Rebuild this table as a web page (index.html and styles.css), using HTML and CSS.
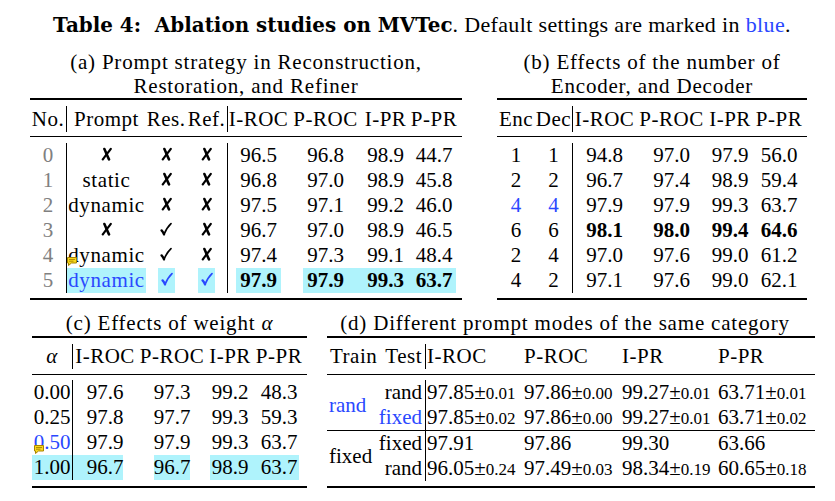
FILE: index.html
```html
<!DOCTYPE html>
<html lang="en">
<head>
<meta charset="utf-8">
<title>Table 4: Ablation studies on MVTec</title>
<link rel="stylesheet" href="styles.css">
</head>
<body>
<div class="page">
  <p class="title"><b class="title-b">Table 4:&nbsp; Ablation studies on MVTec</b><span class="title-r">. Default settings are marked in <span class="blue">blue</span>.</span></p>

  <div class="row row-top">
    <section class="sub sub-a">
      <div class="cap">(a) Prompt strategy in Reconstruction,<br>Restoration, and Refiner</div>
      <div class="rule thick"></div>
      <div class="sec sec-h">
        <div class="grid ga gh">
          <div>No.</div><div class="vl">Prompt</div><div>Res.</div><div>Ref.</div>
          <div class="vl">I-ROC</div><div>P-ROC</div><div>I-PR</div><div>P-PR</div>
        </div>
      </div>
      <div class="rule thin"></div>
      <div class="sec sec-b">
        <div class="grid ga">
          <div class="gray">0</div>
          <div class="vl"><svg class="mk" viewBox="0 0 11 14"><use href="#x"/></svg></div>
          <div><svg class="mk" viewBox="0 0 11 14"><use href="#x"/></svg></div>
          <div><svg class="mk" viewBox="0 0 11 14"><use href="#x"/></svg></div>
          <div class="vl">96.5</div><div>96.8</div><div>98.9</div><div>44.7</div>

          <div class="gray">1</div>
          <div class="vl txt">static</div>
          <div><svg class="mk" viewBox="0 0 11 14"><use href="#x"/></svg></div>
          <div><svg class="mk" viewBox="0 0 11 14"><use href="#x"/></svg></div>
          <div class="vl">96.8</div><div>97.0</div><div>98.9</div><div>45.8</div>

          <div class="gray">2</div>
          <div class="vl txt">dynamic</div>
          <div><svg class="mk" viewBox="0 0 11 14"><use href="#x"/></svg></div>
          <div><svg class="mk" viewBox="0 0 11 14"><use href="#x"/></svg></div>
          <div class="vl">97.5</div><div>97.1</div><div>99.2</div><div>46.0</div>

          <div class="gray">3</div>
          <div class="vl"><svg class="mk" viewBox="0 0 11 14"><use href="#x"/></svg></div>
          <div><svg class="mk mk-v" viewBox="0 0 12 14"><use href="#v"/></svg></div>
          <div><svg class="mk" viewBox="0 0 11 14"><use href="#x"/></svg></div>
          <div class="vl">96.7</div><div>97.0</div><div>98.9</div><div>46.5</div>

          <div class="gray">4</div>
          <div class="vl txt">dynamic</div>
          <div><svg class="mk mk-v" viewBox="0 0 12 14"><use href="#v"/></svg></div>
          <div><svg class="mk" viewBox="0 0 11 14"><use href="#x"/></svg></div>
          <div class="vl">97.4</div><div>97.3</div><div>99.1</div><div>48.4</div>

          <div class="gray">5</div>
          <div class="vl txt hl blue">dynamic</div>
          <div><span class="hlbox-s blue"><svg class="mk mk-v" viewBox="0 0 12 14"><use href="#v"/></svg></span></div>
          <div><span class="hlbox-s blue"><svg class="mk mk-v" viewBox="0 0 12 14"><use href="#v"/></svg></span></div>
          <div class="vl bold"><span class="hlbox">97.9</span></div><div class="bold hl-from14">97.9</div><div class="bold hl">99.3</div><div class="bold hl-to47">63.7</div>
        </div>
      </div>
      <div class="rule thick"></div>
    </section>

    <section class="sub sub-b">
      <div class="cap">(b) Effects of the number of<br>Encoder, and Decoder</div>
      <div class="rule thick"></div>
      <div class="sec sec-h">
        <div class="grid gb gh">
          <div>Enc</div><div>Dec</div><div class="vl">I-ROC</div><div>P-ROC</div><div>I-PR</div><div>P-PR</div>
        </div>
      </div>
      <div class="rule thin"></div>
      <div class="sec sec-b">
        <div class="grid gb">
          <div>1</div><div>1</div><div class="vl">94.8</div><div>97.0</div><div>97.9</div><div>56.0</div>
          <div>2</div><div>2</div><div class="vl">96.7</div><div>97.4</div><div>98.9</div><div>59.4</div>
          <div class="blue">4</div><div class="blue">4</div><div class="vl">97.9</div><div>97.9</div><div>99.3</div><div>63.7</div>
          <div>6</div><div>6</div><div class="vl bold">98.1</div><div class="bold">98.0</div><div class="bold">99.4</div><div class="bold">64.6</div>
          <div>2</div><div>4</div><div class="vl">97.0</div><div>97.6</div><div>99.0</div><div>61.2</div>
          <div>4</div><div>2</div><div class="vl">97.1</div><div>97.6</div><div>99.0</div><div>62.1</div>
        </div>
      </div>
      <div class="rule thick"></div>
    </section>
  </div>

  <div class="row row-bot">
    <section class="sub sub-c">
      <div class="cap cap-1">(c) Effects of weight <i>α</i></div>
      <div class="rule thick"></div>
      <div class="sec sec-h2">
        <div class="grid gc gch">
          <div><i>α</i></div><div class="vl">I-ROC</div><div>P-ROC</div><div>I-PR</div><div>P-PR</div>
        </div>
      </div>
      <div class="rule thin"></div>
      <div class="sec sec-b2">
        <div class="grid gc">
          <div>0.00</div><div class="vl">97.6</div><div>97.3</div><div>99.2</div><div>48.3</div>
          <div>0.25</div><div class="vl">97.8</div><div>97.7</div><div>99.3</div><div>59.3</div>
          <div class="blue">0.50</div><div class="vl">97.9</div><div>97.9</div><div>99.3</div><div>63.7</div>
          <div class="hl">1.00</div><div class="vl hl-to50">96.7</div><div><span class="hlbox-0">96.7</span></div><div class="hl-from3">98.9</div><div class="hl-to46">63.7</div>
        </div>
      </div>
      <div class="rule thick"></div>
    </section>

    <section class="sub sub-d">
      <div class="cap cap-1 cap-d">(d) Different prompt modes of the same category</div>
      <div class="rule thick"></div>
      <div class="sec sec-h2">
        <div class="grid gd gdh">
          <div class="tl">Train</div><div class="tr">Test</div><div class="vl dl1">I-ROC</div><div class="dl">P-ROC</div><div class="dl">I-PR</div><div class="dl">P-PR</div>
        </div>
      </div>
      <div class="rule thin"></div>
      <div class="sec sec-b3">
        <div class="grid gd gd-body">
          <div class="tl train blue tr1">rand</div>
          <div class="tl train tr2">fixed</div>
          <div class="mid-rule"></div>

          <div class="tr">rand</div>
          <div class="vl dl1">97.85±<span class="sm">0.01</span></div><div class="dl">97.86±<span class="sm">0.00</span></div><div class="dl">99.27±<span class="sm">0.01</span></div><div class="dl">63.71±<span class="sm">0.01</span></div>

          <div class="tr blue">fixed</div>
          <div class="vl dl1">97.85±<span class="sm">0.02</span></div><div class="dl">97.86±<span class="sm">0.00</span></div><div class="dl">99.27±<span class="sm">0.01</span></div><div class="dl">63.71±<span class="sm">0.02</span></div>

          <div class="tr">fixed</div>
          <div class="vl dl1">97.91</div><div class="dl">97.86</div><div class="dl">99.30</div><div class="dl">63.66</div>

          <div class="tr">rand</div>
          <div class="vl dl1">96.05±<span class="sm">0.24</span></div><div class="dl">97.49±<span class="sm">0.03</span></div><div class="dl">98.34±<span class="sm">0.19</span></div><div class="dl">60.65±<span class="sm">0.18</span></div>
        </div>
      </div>
      <div class="rule thick"></div>
    </section>
  </div>

  <svg class="note note-1" width="12" height="11" viewBox="0 0 12 11" aria-hidden="true">
    <path d="M1.5 1.5h9v5.5H5.5L2.5 9.5V7H1.5z" fill="#f8d81c" stroke="#a88400" stroke-width="1"/>
    <path d="M3 3.5h6M3 5.2h4.5" stroke="#a88400" stroke-width="0.9"/>
  </svg>
  <svg class="note note-2" width="12" height="11" viewBox="0 0 12 11" aria-hidden="true">
    <path d="M1.5 1.5h9v5.5H5.5L2.5 9.5V7H1.5z" fill="#f8d81c" stroke="#a88400" stroke-width="1"/>
    <path d="M3 3.5h6M3 5.2h4.5" stroke="#a88400" stroke-width="0.9"/>
  </svg>

  <svg class="defs" width="0" height="0" aria-hidden="true">
    <defs>
      <g id="x" fill="none" stroke="currentColor" stroke-linecap="round">
        <path d="M3.4 2 C4.8 5 6.2 8.8 8 12.4" stroke-width="2.6"/>
        <path d="M9.8 1.8 C7.6 4.8 4.6 8.6 1.8 12.4" stroke-width="2.2"/>
      </g>
      <g id="v" fill="none" stroke="currentColor" stroke-linecap="round" stroke-linejoin="round">
        <path d="M1.6 8.4 C2.6 9.4 3.4 10.8 4 12.4" stroke-width="2.3"/>
        <path d="M4 12.4 C5.8 8 8 4.4 11 1.6" stroke-width="1.7"/>
      </g>
    </defs>
  </svg>
</div>
</body>
</html>
```

FILE: styles.css
```css
* { box-sizing: border-box; }

html, body {
  margin: 0;
  padding: 0;
  background: #fff;
}

body {
  font-family: "Liberation Serif", "Times New Roman", serif;
  font-size: 21px;
  color: #000;
}

.page {
  position: relative;
  width: 835px;
  height: 501px;
  overflow: hidden;
}

.title {
  margin: 11px 0 0;
  padding-left: 53px;
  height: 28px;
  line-height: 28px;
  white-space: nowrap;
}

.title-b {
  font-family: "DejaVu Serif", "Liberation Serif", serif;
  font-weight: bold;
  font-size: 19.9px;
}

.title-r {
  font-size: 22px;
  letter-spacing: 0.35px;
}

.blue { color: #2a48ff; }
.gray { color: #808080; }
.bold { font-weight: bold; }

.row {
  display: flex;
  align-items: flex-start;
}

.row-top {
  margin-top: 11px;
  padding-left: 30px;
  gap: 35px;
}

.row-bot {
  margin-top: 11px;
  padding-left: 32px;
  gap: 20px;
}

.sub-a { width: 432px; }
.sub-b { width: 310px; }
.sub-c { width: 275px; }
.sub-d { width: 488px; }

.cap {
  text-align: center;
  line-height: 24px;
  white-space: nowrap;
  letter-spacing: 0.8px;
}

.cap-1 { margin-bottom: 1px; }
.cap-d { padding-right: 12px; }

.rule { background: #000; }
.thick { height: 2px; }
.thin { height: 1px; }

.sec-h { padding: 6px 0 4px; }
.sec-b { padding: 6px 0 5px; }
.sec-h2 { padding: 6px 0 5px; }
.sec-b2 { padding: 5px 0 6px; }
.sec-b3 { padding: 5px 0 5px; }

.grid {
  display: grid;
  grid-auto-rows: 25px;
}

.grid > div {
  text-align: center;
  white-space: nowrap;
  line-height: 25px;
}

.gh { grid-auto-rows: 26px; }
.gh > div { line-height: 26px; }

.gh, .gch, .gdh { letter-spacing: 0.5px; }
.txt { letter-spacing: 0.6px; }

.ga { grid-template-columns: 36px 80px 40px 41px 62px 73px 47px 50px; }
.gb { grid-template-columns: 38px 37px 64px 71px 46px 52px; }
.gc { grid-template-columns: 40px 65px 70px 46px 52px; }
.gd { grid-template-columns: 51px 47px 97px 98px 96px 99px; }

.gd-body { grid-template-rows: 25px 25px 1px 25px 25px; }

.vl { border-left: 1px solid #000; }

.mk {
  display: inline-block;
  width: 11px;
  height: 14px;
  vertical-align: 1px;
}

.mk-v { width: 12px; }

.grid > .tl { text-align: left; padding-left: 3px; }
.grid > .tr { text-align: right; padding-right: 3px; }
.grid > .dl { text-align: left; padding-left: 2px; }
.grid > .dl1 { text-align: left; padding-left: 1px; }

.grid > .train {
  grid-column: 1;
  line-height: 50px;
  padding-left: 2px;
}
.tr1 { grid-row: 1 / 3; }
.tr2 { grid-row: 4 / 6; }

.mid-rule {
  grid-column: 1 / -1;
  grid-row: 3;
  background: #000;
}

.sm { font-size: 17px; }

.hl { background: #aff3fc; }

.hlbox {
  display: inline-block;
  padding: 0 4px;
  background: #aff3fc;
}

.hlbox-s {
  display: inline-block;
  padding: 0 2px 0 3px;
  background: #aff3fc;
}

.hlbox-0 {
  display: inline-block;
  background: #aff3fc;
}

.hl-from14 { background: linear-gradient(90deg, transparent 14px, #aff3fc 14px); }
.hl-to47 { background: linear-gradient(90deg, #aff3fc 47px, transparent 47px); }
.hl-to50 { background: linear-gradient(90deg, #aff3fc 50px, transparent 50px); }
.hl-from3 { background: linear-gradient(90deg, transparent 3px, #aff3fc 3px); }
.hl-to46 { background: linear-gradient(90deg, #aff3fc 46px, transparent 46px); }

/* PDF comment markers laid over the page */
.note { position: absolute; }
.note-1 { left: 66px; top: 256px; }
.note-2 { left: 33px; top: 444px; }

.defs { position: absolute; width: 0; height: 0; overflow: hidden; }
```
